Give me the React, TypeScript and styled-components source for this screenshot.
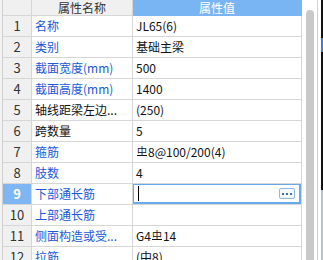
import React from "react";
import styled, { createGlobalStyle } from "styled-components";

const Global = createGlobalStyle`
  html, body { margin: 0; padding: 0; background: #ffffff; overflow: hidden; }
  #root { width: 323px; height: 260px; overflow: hidden; }
`;

const Frame = styled.div`
  display: flex;
  width: 323px;
  height: 260px;
  overflow: hidden;
  font-family: "Noto Sans CJK SC", "Noto Sans", sans-serif;
  font-size: 12px;
  background: #ffffff;
`;

const LeftGutter = styled.div`
  width: 2px;
  flex: none;
  background: #f2f2f2;
`;

const Grid = styled.div`
  display: grid;
  grid-template-columns: 29px 101px 169px;
  grid-auto-rows: 21px;
  grid-template-rows: 16px;
  border-left: 1px solid #cfcfcf;
  flex: none;
  align-self: flex-start;
`;

const Cell = styled.div<{ $kind: "idx" | "name" | "value"; $active?: boolean }>`
  box-sizing: border-box;
  border-right: 1px solid #d6d6d6;
  border-bottom: 1px solid #d6d6d6;
  display: flex;
  align-items: center;
  line-height: 14px;
  white-space: nowrap;
  overflow: hidden;
  position: relative;
  background: ${(p) =>
    p.$kind === "idx" ? (p.$active ? "#7db6f3" : "#f0f0f0") : "#ffffff"};
  color: ${(p) => (p.$kind === "idx" ? (p.$active ? "#ffffff" : "#333333") : "#111111")};
  justify-content: ${(p) => (p.$kind === "idx" ? "center" : "flex-start")};
  padding-left: ${(p) => (p.$kind === "idx" ? "0" : "3px")};
  font-weight: ${(p) => (p.$active ? 700 : 400)};
  font-size: ${(p) => (p.$kind === "idx" ? "13px" : "12px")};
`;

const NameText = styled.span<{ $blue: boolean }>`
  color: ${(p) => (p.$blue ? "#2158d8" : "#111111")};
`;

const HeadCell = styled.div<{ $variant: "plain" | "accent" }>`
  box-sizing: border-box;
  border-right: 1px solid ${(p) => (p.$variant === "accent" ? "#7ab5f3" : "#d6d6d6")};
  border-bottom: 1px solid ${(p) => (p.$variant === "accent" ? "#7ab5f3" : "#d6d6d6")};
  background: ${(p) => (p.$variant === "accent" ? "#7ab5f3" : "#f0f0f0")};
  color: ${(p) => (p.$variant === "accent" ? "#ffffff" : "#333333")};
  display: flex;
  align-items: center;
  justify-content: center;
  line-height: 14px;
  font-size: 12px;
  overflow: hidden;
`;

const Editor = styled.div`
  position: absolute;
  left: -1px;
  top: -1px;
  right: 0;
  bottom: 0;
  border: 2px solid #68a9ea;
  box-sizing: border-box;
  display: flex;
  align-items: center;
  padding-left: 4px;
`;

const Caret = styled.div`
  width: 1px;
  height: 15px;
  background: #000000;
`;

const EllipsisButton = styled.div`
  position: absolute;
  right: 4px;
  top: 3px;
  width: 16px;
  height: 11px;
  box-sizing: border-box;
  border: 1px solid #8cb9e8;
  border-radius: 2px;
  background: #f4f9ff;
  display: flex;
  align-items: center;
  justify-content: center;
  gap: 2px;
`;

const Dot = styled.span`
  width: 2px;
  height: 2px;
  background: #3c6fb0;
`;

const Sym = styled.span`
  display: inline-block;
  font-size: 10px;
  line-height: 9px;
  height: 9px;
  border-bottom: 1px solid #111111;
  margin: 0 1px 0 1px;
  position: relative;
  top: -1px;
`;

const SideArea = styled.div`
  flex: 1;
  display: flex;
  height: 260px;
`;

const TrackGap = styled.div`
  width: 4px;
  flex: none;
`;

const Track = styled.div`
  width: 8px;
  flex: none;
  display: flex;
  flex-direction: column;
  padding-top: 10px;
`;

const Thumb = styled.div`
  flex: 1;
  background: #c9c9c9;
  border-radius: 4px 4px 0 0;
`;

const EdgeGap = styled.div<{ $w: number }>`
  width: ${(p) => p.$w}px;
  flex: none;
`;

const EdgeLine = styled.div<{ $color: string; $w: number }>`
  width: ${(p) => p.$w}px;
  flex: none;
  background: ${(p) => p.$color};
`;

const DarkEdge = styled.div`
  width: 2px;
  flex: none;
  display: flex;
  flex-direction: column;
`;

const EdgeSeg = styled.div<{ $color: string; $h?: number }>`
  background: ${(p) => p.$color};
  ${(p) => (p.$h ? `height: ${p.$h}px; flex: none;` : "flex: 1;")}
`;

type Row = { name: string; value: React.ReactNode; blue: boolean; editing?: boolean };

const rows: Row[] = [
  { name: "名称", value: "JL65(6)", blue: true },
  { name: "类别", value: "基础主梁", blue: true },
  { name: "截面宽度(mm)", value: "500", blue: true },
  { name: "截面高度(mm)", value: "1400", blue: true },
  { name: "轴线距梁左边...", value: "(250)", blue: false },
  { name: "跨数量", value: "5", blue: false },
  {
    name: "箍筋",
    value: (
      <>
        <Sym>中</Sym>8@100/200(4)
      </>
    ),
    blue: true,
  },
  { name: "肢数", value: "4", blue: true },
  { name: "下部通长筋", value: "", blue: true, editing: true },
  { name: "上部通长筋", value: "", blue: true },
  {
    name: "侧面构造或受...",
    value: (
      <>
        G4<Sym>中</Sym>14
      </>
    ),
    blue: true,
  },
  { name: "拉筋", value: "(中8)", blue: true },
];

export default function App() {
  return (
    <>
      <Global />
      <Frame>
        <LeftGutter />
        <Grid>
          <HeadCell $variant="plain" />
          <HeadCell $variant="plain">属性名称</HeadCell>
          <HeadCell $variant="accent">属性值</HeadCell>
          {rows.map((r, i) => (
            <React.Fragment key={i}>
              <Cell $kind="idx" $active={r.editing}>
                {i + 1}
              </Cell>
              <Cell $kind="name">
                <NameText $blue={r.blue}>{r.name}</NameText>
              </Cell>
              <Cell $kind="value">
                {r.editing ? (
                  <Editor>
                    <Caret />
                    <EllipsisButton>
                      <Dot />
                      <Dot />
                      <Dot />
                    </EllipsisButton>
                  </Editor>
                ) : (
                  r.value
                )}
              </Cell>
            </React.Fragment>
          ))}
        </Grid>
        <SideArea>
          <TrackGap />
          <Track>
            <Thumb />
          </Track>
          <EdgeGap $w={3} />
          <EdgeLine $color="#d2d2d2" $w={1} />
          <EdgeGap $w={3} />
          <DarkEdge>
            <EdgeSeg $color="#111111" $h={38} />
            <EdgeSeg $color="#3a7ee0" $h={14} />
            <EdgeSeg $color="#111111" $h={138} />
            <EdgeSeg $color="#b8c0cc" />
          </DarkEdge>
        </SideArea>
      </Frame>
    </>
  );
}
